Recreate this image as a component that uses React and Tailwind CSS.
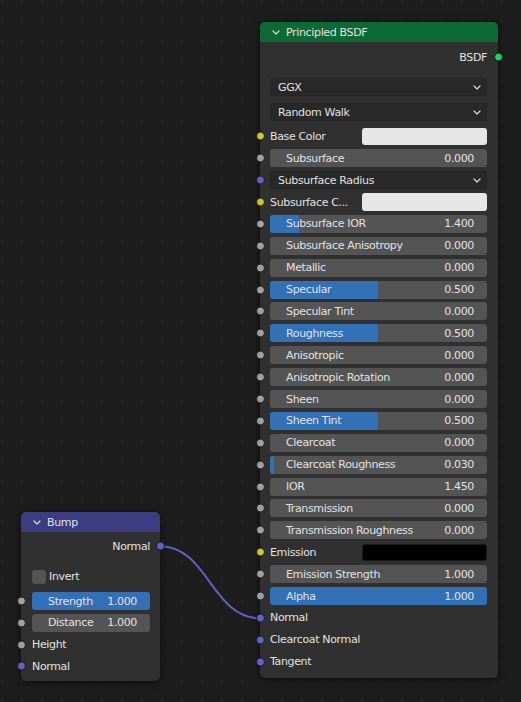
import React from "react";

const SOCKET = {
  g: "bg-[#a1a1a1]",
  y: "bg-[#c7c729]",
  b: "bg-[#6363c7]",
  s: "bg-[#1fd06a]",
};

const ROWS = [
  { t: "color", label: "Base Color", sock: "y", swatch: "bg-[#e6e6e6]" },
  { t: "slider", label: "Subsurface", value: "0.000" },
  { t: "select", label: "Subsurface Radius", sock: "b" },
  { t: "color", label: "Subsurface C...", sock: "y", swatch: "bg-[#e6e6e6]" },
  { t: "slider", label: "Subsurface IOR", value: "1.400", fill: 29 },
  { t: "slider", label: "Subsurface Anisotropy", value: "0.000" },
  { t: "slider", label: "Metallic", value: "0.000" },
  { t: "slider", label: "Specular", value: "0.500", fill: 108 },
  { t: "slider", label: "Specular Tint", value: "0.000" },
  { t: "slider", label: "Roughness", value: "0.500", fill: 108 },
  { t: "slider", label: "Anisotropic", value: "0.000" },
  { t: "slider", label: "Anisotropic Rotation", value: "0.000" },
  { t: "slider", label: "Sheen", value: "0.000" },
  { t: "slider", label: "Sheen Tint", value: "0.500", fill: 108 },
  { t: "slider", label: "Clearcoat", value: "0.000" },
  { t: "slider", label: "Clearcoat Roughness", value: "0.030", fill: 4 },
  { t: "slider", label: "IOR", value: "1.450" },
  { t: "slider", label: "Transmission", value: "0.000" },
  { t: "slider", label: "Transmission Roughness", value: "0.000" },
  { t: "color", label: "Emission", sock: "y", swatch: "bg-black border border-[#1a1a1a]" },
  { t: "slider", label: "Emission Strength", value: "1.000" },
  { t: "slider", label: "Alpha", value: "1.000", fill: "full" },
  { t: "label", label: "Normal", sock: "b" },
  { t: "label", label: "Clearcoat Normal", sock: "b" },
  { t: "label", label: "Tangent", sock: "b" },
];

function Socket({ kind = "g", side = "left" }) {
  return (
    <span
      className={
        "absolute top-1/2 -translate-y-1/2 w-[9px] h-[9px] rounded-full border border-[#1b1b1b] " +
        SOCKET[kind] +
        (side === "left" ? " left-[-4.5px]" : " right-[-4.5px]")
      }
    />
  );
}

function Chevron({ className = "" }) {
  return (
    <svg width="8" height="5" viewBox="0 0 8 5" className={className}>
      <path d="M1 1 L4 4 L7 1" fill="none" stroke="#d8d8d8" strokeWidth="1.2" strokeLinecap="round" strokeLinejoin="round" />
    </svg>
  );
}

function Slider({ label, value, fill }) {
  const full = fill === "full";
  return (
    <div className={"relative flex-1 h-[18px] rounded-[3px] overflow-hidden " + (full ? "bg-[#3271b8]" : "bg-[#545454]")}>
      {fill && !full ? (
        <div className="absolute left-0 top-0 bottom-0 bg-[#3271b8]" style={{ width: fill }} />
      ) : null}
      <div className="relative flex items-center justify-between h-full pl-[16px] pr-[13px]">
        <span>{label}</span>
        <span>{value}</span>
      </div>
    </div>
  );
}

function Select({ label, className = "flex-1" }) {
  return (
    <div className={"h-[18px] shrink-0 rounded-[3px] bg-[#282828] border border-[#242424] flex items-center justify-between pl-[7px] pr-[5px] " + className}>
      <span>{label}</span>
      <Chevron />
    </div>
  );
}

function Row({ row }) {
  return (
    <div className="relative h-[21.9px] flex items-center pl-[10px] pr-[11px]">
      <Socket kind={row.sock || "g"} />
      {row.t === "slider" && <Slider label={row.label} value={row.value} fill={row.fill} />}
      {row.t === "select" && <Select label={row.label} />}
      {row.t === "label" && <span>{row.label}</span>}
      {row.t === "color" && (
        <>
          <span className="flex-1">{row.label}</span>
          <div className={"w-[125px] h-[17.5px] rounded-[3px] " + row.swatch} />
        </>
      )}
    </div>
  );
}

function Header({ title, color }) {
  return (
    <div className={"h-[20px] flex items-center pl-[12px] gap-[6px] rounded-t-[5px] " + color}>
      <Chevron />
      <span>{title}</span>
    </div>
  );
}

function PrincipledNode() {
  return (
    <div className="absolute left-[260px] top-[22px] w-[238px] rounded-[5px] bg-[#303030] shadow-[0_1px_7px_rgba(0,0,0,0.7)]">
      <Header title="Principled BSDF" color="bg-[#0e6a33]" />
      <div className="pt-[4px] pb-[5px]">
        <div className="relative h-[22px] flex items-center justify-end pr-[11px]">
          <span>BSDF</span>
          <Socket kind="s" side="right" />
        </div>
        <div className="mt-[10px] pl-[10px] pr-[11px] flex flex-col gap-[7px]">
          <Select label="GGX" className="w-full" />
          <Select label="Random Walk" className="w-full" />
        </div>
        <div className="mt-[4.4px]">
          {ROWS.map((r) => (
            <Row key={r.label} row={r} />
          ))}
        </div>
      </div>
    </div>
  );
}

function BumpNode() {
  return (
    <div className="absolute left-[21px] top-[512px] w-[139px] rounded-[5px] bg-[#303030] shadow-[0_1px_7px_rgba(0,0,0,0.7)]">
      <Header title="Bump" color="bg-[#3b3c82]" />
      <div className="pt-[3.3px] pb-[3.8px]">
        <div className="relative h-[22px] flex items-center justify-end pr-[10px]">
          <span>Normal</span>
          <Socket kind="b" side="right" />
        </div>
        <div className="mt-[8.7px] h-[22px] flex items-center pl-[11px] gap-[3px]">
          <div className="w-[14px] h-[14px] rounded-[3px] bg-[#545454]" />
          <span>Invert</span>
        </div>
        <div className="mt-[2.4px]">
          <div className="relative h-[21.7px] flex items-center pl-[11px] pr-[10px]">
            <Socket />
            <Slider label="Strength" value="1.000" fill="full" />
          </div>
          <div className="relative h-[21.7px] flex items-center pl-[11px] pr-[10px]">
            <Socket />
            <Slider label="Distance" value="1.000" />
          </div>
          <div className="relative h-[21.7px] flex items-center pl-[11px]">
            <Socket />
            <span>Height</span>
          </div>
          <div className="relative h-[21.7px] flex items-center pl-[11px]">
            <Socket kind="b" />
            <span>Normal</span>
          </div>
        </div>
      </div>
    </div>
  );
}

export default function App() {
  return (
    <div
      className="relative w-[521px] h-[702px] overflow-hidden bg-[#1d1d1d] bg-[radial-gradient(circle,#2b2b2b_1px,transparent_1.4px)] bg-[length:20px_20px] bg-[position:-8px_-9px] text-[#e2e2e2] text-[11px] tracking-[-0.35px] leading-none"
      style={{ fontFamily: '"DejaVu Sans", "Liberation Sans", sans-serif' }}
    >
      {/* link between Bump.Normal and Principled.Normal */}
      <svg className="absolute inset-0" width="521" height="702">
        <path d="M160 546.3 C 208 546.3, 212 618.3, 260 618.3" fill="none" stroke="#6060c6" strokeWidth="2" />
      </svg>
      <BumpNode />
      <PrincipledNode />
    </div>
  );
}
